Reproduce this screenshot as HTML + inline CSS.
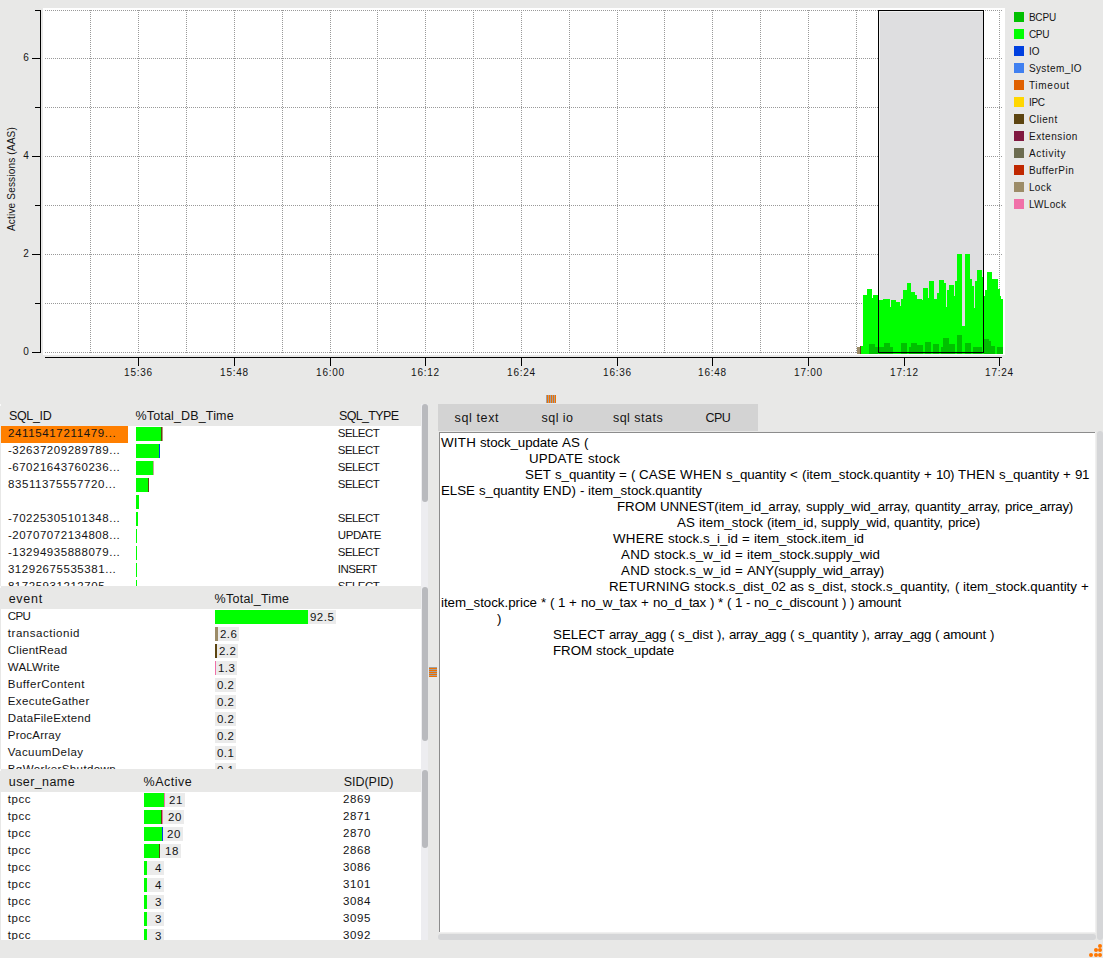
<!DOCTYPE html><html><head><meta charset="utf-8"><style>
html,body{margin:0;padding:0;}
body{width:1103px;height:958px;background:#e8e8e7;position:relative;overflow:hidden;font-family:"Liberation Sans", sans-serif;color:#141414;}
.a{position:absolute;}
.t{position:absolute;white-space:pre;line-height:1;}

</style></head><body>
<svg class="a" style="left:0;top:0" width="1103" height="392" viewBox="0 0 1103 392" shape-rendering="crispEdges"><rect x="43" y="8" width="962" height="347" fill="#ffffff"/><line x1="45" y1="10.5" x2="1002" y2="10.5" stroke="#999" stroke-width="1" stroke-dasharray="1 1"/><line x1="45" y1="58.5" x2="1002" y2="58.5" stroke="#999" stroke-width="1" stroke-dasharray="1 1"/><line x1="45" y1="107.5" x2="1002" y2="107.5" stroke="#999" stroke-width="1" stroke-dasharray="1 1"/><line x1="45" y1="156.5" x2="1002" y2="156.5" stroke="#999" stroke-width="1" stroke-dasharray="1 1"/><line x1="45" y1="205.5" x2="1002" y2="205.5" stroke="#999" stroke-width="1" stroke-dasharray="1 1"/><line x1="45" y1="254.5" x2="1002" y2="254.5" stroke="#999" stroke-width="1" stroke-dasharray="1 1"/><line x1="45" y1="303.5" x2="1002" y2="303.5" stroke="#999" stroke-width="1" stroke-dasharray="1 1"/><line x1="45" y1="352.5" x2="1002" y2="352.5" stroke="#999" stroke-width="1" stroke-dasharray="1 1"/><line x1="90.5" y1="10" x2="90.5" y2="353" stroke="#999" stroke-width="1" stroke-dasharray="1 1"/><line x1="138.5" y1="10" x2="138.5" y2="353" stroke="#999" stroke-width="1" stroke-dasharray="1 1"/><line x1="186.5" y1="10" x2="186.5" y2="353" stroke="#999" stroke-width="1" stroke-dasharray="1 1"/><line x1="234.5" y1="10" x2="234.5" y2="353" stroke="#999" stroke-width="1" stroke-dasharray="1 1"/><line x1="282.5" y1="10" x2="282.5" y2="353" stroke="#999" stroke-width="1" stroke-dasharray="1 1"/><line x1="330.5" y1="10" x2="330.5" y2="353" stroke="#999" stroke-width="1" stroke-dasharray="1 1"/><line x1="377.5" y1="10" x2="377.5" y2="353" stroke="#999" stroke-width="1" stroke-dasharray="1 1"/><line x1="425.5" y1="10" x2="425.5" y2="353" stroke="#999" stroke-width="1" stroke-dasharray="1 1"/><line x1="473.5" y1="10" x2="473.5" y2="353" stroke="#999" stroke-width="1" stroke-dasharray="1 1"/><line x1="521.5" y1="10" x2="521.5" y2="353" stroke="#999" stroke-width="1" stroke-dasharray="1 1"/><line x1="569.5" y1="10" x2="569.5" y2="353" stroke="#999" stroke-width="1" stroke-dasharray="1 1"/><line x1="617.5" y1="10" x2="617.5" y2="353" stroke="#999" stroke-width="1" stroke-dasharray="1 1"/><line x1="664.5" y1="10" x2="664.5" y2="353" stroke="#999" stroke-width="1" stroke-dasharray="1 1"/><line x1="712.5" y1="10" x2="712.5" y2="353" stroke="#999" stroke-width="1" stroke-dasharray="1 1"/><line x1="760.5" y1="10" x2="760.5" y2="353" stroke="#999" stroke-width="1" stroke-dasharray="1 1"/><line x1="808.5" y1="10" x2="808.5" y2="353" stroke="#999" stroke-width="1" stroke-dasharray="1 1"/><line x1="856.5" y1="10" x2="856.5" y2="353" stroke="#999" stroke-width="1" stroke-dasharray="1 1"/><line x1="904.5" y1="10" x2="904.5" y2="353" stroke="#999" stroke-width="1" stroke-dasharray="1 1"/><line x1="951.5" y1="10" x2="951.5" y2="353" stroke="#999" stroke-width="1" stroke-dasharray="1 1"/><line x1="999.5" y1="10" x2="999.5" y2="353" stroke="#999" stroke-width="1" stroke-dasharray="1 1"/><rect x="878" y="10" width="106" height="343" fill="#dedee0"/><rect x="879" y="11" width="104" height="1" fill="#efefef"/><rect x="879" y="11" width="1" height="341" fill="#efefef"/><polygon points="861,354 861,346 863,346 863,295 867,295 867,289 872,289 872,298 873,298 873,295 878,295 878,300 883,300 883,299 890,299 890,307 891,307 891,300 896,300 896,302 900,302 900,306 901,306 901,299 903,299 903,290 907,290 907,283 911,283 911,292 915,292 915,295 917,295 917,299 922,299 922,300 923,300 923,288 928,288 928,298 929,298 929,281 934,281 934,299 937,299 937,293 939,293 939,280 944,280 944,283 946,283 946,307 947,307 947,290 949,290 949,285 954,285 954,296 955,296 955,281 957,281 957,254 962,254 962,326 965,326 965,254 970,254 970,279 972,279 972,286 974,286 974,308 975,308 975,281 977,281 977,270 982,270 982,277 984,277 984,296 985,296 985,290 987,290 987,272 992,272 992,279 998,279 998,289 1000,289 1000,296 1001,296 1001,299 1003,299 1003,354" fill="#00ff00"/><rect x="869" y="344" width="6" height="10" fill="#00c000"/><rect x="875" y="347" width="3" height="7" fill="#00c000"/><rect x="879" y="347" width="5" height="7" fill="#00c000"/><rect x="884" y="343" width="6" height="11" fill="#00c000"/><rect x="890" y="347" width="3" height="7" fill="#00c000"/><rect x="901" y="343" width="6" height="11" fill="#00c000"/><rect x="909" y="347" width="2" height="7" fill="#00c000"/><rect x="911" y="343" width="6" height="11" fill="#00c000"/><rect x="917" y="345" width="6" height="9" fill="#00c000"/><rect x="925" y="342" width="6" height="12" fill="#00c000"/><rect x="933" y="344" width="6" height="10" fill="#00c000"/><rect x="941" y="347" width="2" height="7" fill="#00c000"/><rect x="943" y="338" width="6" height="16" fill="#00c000"/><rect x="949" y="344" width="6" height="10" fill="#00c000"/><rect x="957" y="335" width="5" height="19" fill="#00c000"/><rect x="965" y="343" width="6" height="11" fill="#00c000"/><rect x="973" y="347" width="9" height="7" fill="#00c000"/><rect x="984" y="339" width="5" height="15" fill="#00c000"/><rect x="989" y="341" width="2" height="13" fill="#00c000"/><rect x="991" y="346" width="4" height="8" fill="#00c000"/><rect x="997" y="347" width="6" height="7" fill="#00c000"/><rect x="857" y="347" width="3" height="7" fill="#9c8c68"/><rect x="860" y="346" width="1" height="8" fill="#5c4410"/><rect x="878.5" y="10.5" width="105" height="342" fill="none" stroke="#000" stroke-width="1"/><line x1="40.5" y1="10" x2="40.5" y2="353" stroke="#000"/><line x1="32" y1="58.5" x2="41" y2="58.5" stroke="#000"/><line x1="32" y1="156.5" x2="41" y2="156.5" stroke="#000"/><line x1="32" y1="254.5" x2="41" y2="254.5" stroke="#000"/><line x1="32" y1="352.5" x2="41" y2="352.5" stroke="#000"/><line x1="35" y1="10.5" x2="41" y2="10.5" stroke="#000"/><line x1="35" y1="107.5" x2="41" y2="107.5" stroke="#000"/><line x1="35" y1="205.5" x2="41" y2="205.5" stroke="#000"/><line x1="35" y1="303.5" x2="41" y2="303.5" stroke="#000"/><line x1="45" y1="357.5" x2="1002" y2="357.5" stroke="#000"/><line x1="138.5" y1="358" x2="138.5" y2="366" stroke="#000"/><line x1="234.5" y1="358" x2="234.5" y2="366" stroke="#000"/><line x1="330.5" y1="358" x2="330.5" y2="366" stroke="#000"/><line x1="425.5" y1="358" x2="425.5" y2="366" stroke="#000"/><line x1="521.5" y1="358" x2="521.5" y2="366" stroke="#000"/><line x1="617.5" y1="358" x2="617.5" y2="366" stroke="#000"/><line x1="712.5" y1="358" x2="712.5" y2="366" stroke="#000"/><line x1="808.5" y1="358" x2="808.5" y2="366" stroke="#000"/><line x1="904.5" y1="358" x2="904.5" y2="366" stroke="#000"/><line x1="999.5" y1="358" x2="999.5" y2="366" stroke="#000"/></svg>
<div class="t" style="left:23.14px;top:53px;font-size:10px;letter-spacing:0.801px;color:#141414;">6</div>
<div class="t" style="left:23.14px;top:151px;font-size:10px;letter-spacing:0.801px;color:#141414;">4</div>
<div class="t" style="left:23.14px;top:249px;font-size:10px;letter-spacing:0.801px;color:#141414;">2</div>
<div class="t" style="left:23.14px;top:347px;font-size:10px;letter-spacing:0.801px;color:#141414;">0</div>
<div class="t" style="left:-47.8px;top:173.7px;width:120px;text-align:center;font-size:10px;letter-spacing:0.189px;transform:rotate(-90deg);transform-origin:50% 50%;">Active Sessions (AAS)</div>
<div class="t" style="left:124.09px;top:368px;font-size:10px;letter-spacing:0.759px;color:#141414;">15:36</div>
<div class="t" style="left:220.09px;top:368px;font-size:10px;letter-spacing:0.759px;color:#141414;">15:48</div>
<div class="t" style="left:316.09px;top:368px;font-size:10px;letter-spacing:0.759px;color:#141414;">16:00</div>
<div class="t" style="left:411.09px;top:368px;font-size:10px;letter-spacing:0.759px;color:#141414;">16:12</div>
<div class="t" style="left:507.09px;top:368px;font-size:10px;letter-spacing:0.759px;color:#141414;">16:24</div>
<div class="t" style="left:603.09px;top:368px;font-size:10px;letter-spacing:0.759px;color:#141414;">16:36</div>
<div class="t" style="left:698.09px;top:368px;font-size:10px;letter-spacing:0.759px;color:#141414;">16:48</div>
<div class="t" style="left:794.09px;top:368px;font-size:10px;letter-spacing:0.759px;color:#141414;">17:00</div>
<div class="t" style="left:890.09px;top:368px;font-size:10px;letter-spacing:0.759px;color:#141414;">17:12</div>
<div class="t" style="left:985.09px;top:368px;font-size:10px;letter-spacing:0.759px;color:#141414;">17:24</div>
<div class="a" style="left:1014px;top:12px;width:10px;height:10px;background:#00c000"></div>
<div class="t" style="left:1028.90px;top:13px;font-size:10px;letter-spacing:-0.192px;color:#141414;">BCPU</div>
<div class="a" style="left:1014px;top:29px;width:10px;height:10px;background:#00ff00"></div>
<div class="t" style="left:1028.90px;top:30px;font-size:10px;letter-spacing:-0.260px;color:#141414;">CPU</div>
<div class="a" style="left:1014px;top:46px;width:10px;height:10px;background:#0040e0"></div>
<div class="t" style="left:1028.90px;top:47px;font-size:10px;letter-spacing:0.132px;color:#141414;">IO</div>
<div class="a" style="left:1014px;top:63px;width:10px;height:10px;background:#4080f0"></div>
<div class="t" style="left:1028.90px;top:64px;font-size:10px;letter-spacing:0.406px;color:#141414;">System_IO</div>
<div class="a" style="left:1014px;top:80px;width:10px;height:10px;background:#e06000"></div>
<div class="t" style="left:1028.90px;top:81px;font-size:10px;letter-spacing:0.728px;color:#141414;">Timeout</div>
<div class="a" style="left:1014px;top:97px;width:10px;height:10px;background:#ffd700"></div>
<div class="t" style="left:1028.90px;top:98px;font-size:10px;letter-spacing:-0.236px;color:#141414;">IPC</div>
<div class="a" style="left:1014px;top:114px;width:10px;height:10px;background:#5c4410"></div>
<div class="t" style="left:1028.90px;top:115px;font-size:10px;letter-spacing:0.564px;color:#141414;">Client</div>
<div class="a" style="left:1014px;top:131px;width:10px;height:10px;background:#801840"></div>
<div class="t" style="left:1028.90px;top:132px;font-size:10px;letter-spacing:0.575px;color:#141414;">Extension</div>
<div class="a" style="left:1014px;top:148px;width:10px;height:10px;background:#6c6c50"></div>
<div class="t" style="left:1028.90px;top:149px;font-size:10px;letter-spacing:0.716px;color:#141414;">Activity</div>
<div class="a" style="left:1014px;top:165px;width:10px;height:10px;background:#c02800"></div>
<div class="t" style="left:1028.90px;top:166px;font-size:10px;letter-spacing:0.481px;color:#141414;">BufferPin</div>
<div class="a" style="left:1014px;top:182px;width:10px;height:10px;background:#9c8c68"></div>
<div class="t" style="left:1028.90px;top:183px;font-size:10px;letter-spacing:0.420px;color:#141414;">Lock</div>
<div class="a" style="left:1014px;top:199px;width:10px;height:10px;background:#f070a8"></div>
<div class="t" style="left:1028.90px;top:200px;font-size:10px;letter-spacing:0.327px;color:#141414;">LWLock</div>
<div class="a" style="left:546px;top:395px;width:10px;height:8px;background:repeating-linear-gradient(90deg,#a0a0a0 0 1px,#f07000 1px 2px)"></div>
<div class="a" style="left:429px;top:667px;width:8px;height:10px;background:repeating-linear-gradient(180deg,#a0a0a0 0 1px,#f07000 1px 2px)"></div>
<div class="a" style="left:1px;top:426px;width:420px;height:160px;background:#fff;overflow:hidden">
<div class="a" style="left:0px;top:0px;width:127px;height:17px;background:#ff7f00;"></div>
<div class="t" style="left:6.90px;top:2px;font-size:11.5px;letter-spacing:0.650px;color:#141414;">24115417211479...</div>
<div class="a" style="left:135px;top:1px;width:25px;height:14px;background:#00ff00;"></div>
<div class="a" style="left:160px;top:1px;width:1px;height:14px;background:#5c4410;"></div>
<div class="a" style="left:161px;top:1px;width:1px;height:14px;background:#b09878;"></div>
<div class="t" style="left:336.80px;top:2px;font-size:11.5px;letter-spacing:-0.554px;color:#141414;">SELECT</div>
<div class="t" style="left:6.90px;top:19px;font-size:11.5px;letter-spacing:0.527px;color:#141414;">-32637209289789...</div>
<div class="a" style="left:135px;top:18px;width:23px;height:14px;background:#00ff00;"></div>
<div class="a" style="left:158px;top:18px;width:1px;height:14px;background:#0040e0;"></div>
<div class="t" style="left:336.80px;top:19px;font-size:11.5px;letter-spacing:-0.554px;color:#141414;">SELECT</div>
<div class="t" style="left:6.90px;top:36px;font-size:11.5px;letter-spacing:0.527px;color:#141414;">-67021643760236...</div>
<div class="a" style="left:135px;top:35px;width:17px;height:14px;background:#00ff00;"></div>
<div class="a" style="left:152px;top:35px;width:1px;height:14px;background:#c8a898;"></div>
<div class="t" style="left:336.80px;top:36px;font-size:11.5px;letter-spacing:-0.554px;color:#141414;">SELECT</div>
<div class="t" style="left:6.90px;top:53px;font-size:11.5px;letter-spacing:0.600px;color:#141414;">83511375557720...</div>
<div class="a" style="left:135px;top:52px;width:12px;height:14px;background:#00ff00;"></div>
<div class="a" style="left:147px;top:52px;width:1px;height:14px;background:#5c4410;"></div>
<div class="t" style="left:336.80px;top:53px;font-size:11.5px;letter-spacing:-0.554px;color:#141414;">SELECT</div>
<div class="a" style="left:135px;top:69px;width:3px;height:14px;background:#00ff00;"></div>
<div class="t" style="left:6.90px;top:87px;font-size:11.5px;letter-spacing:0.527px;color:#141414;">-70225305101348...</div>
<div class="a" style="left:135px;top:86px;width:2px;height:14px;background:#00ff00;"></div>
<div class="t" style="left:336.80px;top:87px;font-size:11.5px;letter-spacing:-0.554px;color:#141414;">SELECT</div>
<div class="t" style="left:6.90px;top:104px;font-size:11.5px;letter-spacing:0.527px;color:#141414;">-20707072134808...</div>
<div class="a" style="left:135px;top:103px;width:1px;height:14px;background:#00ff00;"></div>
<div class="t" style="left:336.80px;top:104px;font-size:11.5px;letter-spacing:-0.415px;color:#141414;">UPDATE</div>
<div class="t" style="left:6.90px;top:121px;font-size:11.5px;letter-spacing:0.527px;color:#141414;">-13294935888079...</div>
<div class="a" style="left:135px;top:120px;width:1px;height:14px;background:#00ff00;"></div>
<div class="t" style="left:336.80px;top:121px;font-size:11.5px;letter-spacing:-0.554px;color:#141414;">SELECT</div>
<div class="t" style="left:6.90px;top:138px;font-size:11.5px;letter-spacing:0.550px;color:#141414;">31292675535381...</div>
<div class="a" style="left:135px;top:137px;width:1px;height:14px;background:#00ff00;"></div>
<div class="t" style="left:336.80px;top:138px;font-size:11.5px;letter-spacing:-0.499px;color:#141414;">INSERT</div>
<div class="t" style="left:6.90px;top:155px;font-size:11.5px;letter-spacing:0.550px;color:#141414;">81725931212705...</div>
<div class="a" style="left:135px;top:154px;width:1px;height:14px;background:#00ff00;"></div>
<div class="t" style="left:336.80px;top:155px;font-size:11.5px;letter-spacing:-0.554px;color:#141414;">SELECT</div>
</div>
<div class="t" style="left:8.90px;top:410px;font-size:12.5px;letter-spacing:-0.323px;color:#141414;">SQL_ID</div>
<div class="t" style="left:135.50px;top:410px;font-size:12.5px;letter-spacing:0.155px;color:#141414;">%Total_DB_Time</div>
<div class="t" style="left:339.10px;top:410px;font-size:12.5px;letter-spacing:-0.673px;color:#141414;">SQL_TYPE</div>
<div class="a" style="left:1px;top:609px;width:420px;height:160px;background:#fff;overflow:hidden">
<div class="t" style="left:6.80px;top:2px;font-size:11.5px;letter-spacing:-0.638px;color:#141414;">CPU</div>
<div class="a" style="left:214px;top:1px;width:93px;height:14px;background:#00ff00;"></div>
<div class="a" style="left:307px;top:1px;width:28px;height:14px;background:#ebebeb;"></div>
<div class="t" style="left:308.90px;top:3px;font-size:11.5px;letter-spacing:0.527px;color:#141414;">92.5</div>
<div class="t" style="left:6.80px;top:19px;font-size:11.5px;letter-spacing:0.536px;color:#141414;">transactionid</div>
<div class="a" style="left:214px;top:18px;width:3px;height:14px;background:#9c8c68;"></div>
<div class="a" style="left:217px;top:18px;width:21px;height:14px;background:#ebebeb;"></div>
<div class="t" style="left:218.90px;top:20px;font-size:11.5px;letter-spacing:0.502px;color:#141414;">2.6</div>
<div class="t" style="left:6.80px;top:36px;font-size:11.5px;letter-spacing:0.259px;color:#141414;">ClientRead</div>
<div class="a" style="left:214px;top:35px;width:2px;height:14px;background:#5c4410;"></div>
<div class="a" style="left:216px;top:35px;width:21px;height:14px;background:#ebebeb;"></div>
<div class="t" style="left:217.90px;top:37px;font-size:11.5px;letter-spacing:0.502px;color:#141414;">2.2</div>
<div class="t" style="left:6.80px;top:53px;font-size:11.5px;letter-spacing:0.212px;color:#141414;">WALWrite</div>
<div class="a" style="left:214px;top:52px;width:1px;height:14px;background:#f070a8;"></div>
<div class="a" style="left:215px;top:52px;width:21px;height:14px;background:#ebebeb;"></div>
<div class="t" style="left:216.90px;top:54px;font-size:11.5px;letter-spacing:0.502px;color:#141414;">1.3</div>
<div class="t" style="left:6.80px;top:70px;font-size:11.5px;letter-spacing:0.491px;color:#141414;">BufferContent</div>
<div class="a" style="left:214px;top:69px;width:21px;height:14px;background:#ebebeb;"></div>
<div class="t" style="left:215.90px;top:71px;font-size:11.5px;letter-spacing:0.502px;color:#141414;">0.2</div>
<div class="t" style="left:6.80px;top:87px;font-size:11.5px;letter-spacing:0.394px;color:#141414;">ExecuteGather</div>
<div class="a" style="left:214px;top:86px;width:21px;height:14px;background:#ebebeb;"></div>
<div class="t" style="left:215.90px;top:88px;font-size:11.5px;letter-spacing:0.502px;color:#141414;">0.2</div>
<div class="t" style="left:6.80px;top:104px;font-size:11.5px;letter-spacing:0.324px;color:#141414;">DataFileExtend</div>
<div class="a" style="left:214px;top:103px;width:21px;height:14px;background:#ebebeb;"></div>
<div class="t" style="left:215.90px;top:105px;font-size:11.5px;letter-spacing:0.502px;color:#141414;">0.2</div>
<div class="t" style="left:6.80px;top:121px;font-size:11.5px;letter-spacing:0.223px;color:#141414;">ProcArray</div>
<div class="a" style="left:214px;top:120px;width:21px;height:14px;background:#ebebeb;"></div>
<div class="t" style="left:215.90px;top:122px;font-size:11.5px;letter-spacing:0.502px;color:#141414;">0.2</div>
<div class="t" style="left:6.80px;top:138px;font-size:11.5px;letter-spacing:0.448px;color:#141414;">VacuumDelay</div>
<div class="a" style="left:214px;top:137px;width:21px;height:14px;background:#ebebeb;"></div>
<div class="t" style="left:215.90px;top:139px;font-size:11.5px;letter-spacing:0.502px;color:#141414;">0.1</div>
<div class="t" style="left:6.80px;top:155px;font-size:11.5px;letter-spacing:0.384px;color:#141414;">BgWorkerShutdown</div>
<div class="a" style="left:214px;top:154px;width:21px;height:14px;background:#ebebeb;"></div>
<div class="t" style="left:215.90px;top:156px;font-size:11.5px;letter-spacing:0.502px;color:#141414;">0.1</div>
</div>
<div class="t" style="left:8.70px;top:593px;font-size:12.5px;letter-spacing:0.720px;color:#141414;">event</div>
<div class="t" style="left:214.50px;top:593px;font-size:12.5px;letter-spacing:0.274px;color:#141414;">%Total_Time</div>
<div class="a" style="left:1px;top:792px;width:420px;height:148px;background:#fff;overflow:hidden">
<div class="t" style="left:6.80px;top:2px;font-size:11.5px;letter-spacing:0.575px;color:#141414;">tpcc</div>
<div class="a" style="left:143px;top:1px;width:20px;height:14px;background:#00ff00;"></div>
<div class="a" style="left:163px;top:1px;width:1px;height:14px;background:#f070a8;"></div>
<div class="a" style="left:164px;top:1px;width:20px;height:14px;background:#ebebeb;"></div>
<div class="t" style="left:168.00px;top:3px;font-size:11.5px;letter-spacing:0.603px;color:#141414;">21</div>
<div class="t" style="left:342.10px;top:2px;font-size:11.5px;letter-spacing:0.603px;color:#141414;">2869</div>
<div class="t" style="left:6.80px;top:19px;font-size:11.5px;letter-spacing:0.575px;color:#141414;">tpcc</div>
<div class="a" style="left:143px;top:18px;width:17px;height:14px;background:#00ff00;"></div>
<div class="a" style="left:160px;top:18px;width:1px;height:14px;background:#5c4410;"></div>
<div class="a" style="left:161px;top:18px;width:1px;height:14px;background:#f070a8;"></div>
<div class="a" style="left:162px;top:18px;width:21px;height:14px;background:#ebebeb;"></div>
<div class="t" style="left:167.00px;top:20px;font-size:11.5px;letter-spacing:0.603px;color:#141414;">20</div>
<div class="t" style="left:342.10px;top:19px;font-size:11.5px;letter-spacing:0.603px;color:#141414;">2871</div>
<div class="t" style="left:6.80px;top:36px;font-size:11.5px;letter-spacing:0.575px;color:#141414;">tpcc</div>
<div class="a" style="left:143px;top:35px;width:18px;height:14px;background:#00ff00;"></div>
<div class="a" style="left:161px;top:35px;width:1px;height:14px;background:#0040e0;"></div>
<div class="a" style="left:162px;top:35px;width:20px;height:14px;background:#ebebeb;"></div>
<div class="t" style="left:166.00px;top:37px;font-size:11.5px;letter-spacing:0.603px;color:#141414;">20</div>
<div class="t" style="left:342.10px;top:36px;font-size:11.5px;letter-spacing:0.603px;color:#141414;">2870</div>
<div class="t" style="left:6.80px;top:53px;font-size:11.5px;letter-spacing:0.575px;color:#141414;">tpcc</div>
<div class="a" style="left:143px;top:52px;width:15px;height:14px;background:#00ff00;"></div>
<div class="a" style="left:158px;top:52px;width:1px;height:14px;background:#5c4410;"></div>
<div class="a" style="left:159px;top:52px;width:21px;height:14px;background:#ebebeb;"></div>
<div class="t" style="left:164.00px;top:54px;font-size:11.5px;letter-spacing:0.603px;color:#141414;">18</div>
<div class="t" style="left:342.10px;top:53px;font-size:11.5px;letter-spacing:0.603px;color:#141414;">2868</div>
<div class="t" style="left:6.80px;top:70px;font-size:11.5px;letter-spacing:0.575px;color:#141414;">tpcc</div>
<div class="a" style="left:143px;top:69px;width:3px;height:14px;background:#00ff00;"></div>
<div class="a" style="left:146px;top:69px;width:17px;height:14px;background:#ebebeb;"></div>
<div class="t" style="left:154.00px;top:71px;font-size:11.5px;letter-spacing:0.603px;color:#141414;">4</div>
<div class="t" style="left:342.10px;top:70px;font-size:11.5px;letter-spacing:0.603px;color:#141414;">3086</div>
<div class="t" style="left:6.80px;top:87px;font-size:11.5px;letter-spacing:0.575px;color:#141414;">tpcc</div>
<div class="a" style="left:143px;top:86px;width:3px;height:14px;background:#00ff00;"></div>
<div class="a" style="left:146px;top:86px;width:17px;height:14px;background:#ebebeb;"></div>
<div class="t" style="left:154.00px;top:88px;font-size:11.5px;letter-spacing:0.603px;color:#141414;">4</div>
<div class="t" style="left:342.10px;top:87px;font-size:11.5px;letter-spacing:0.603px;color:#141414;">3101</div>
<div class="t" style="left:6.80px;top:104px;font-size:11.5px;letter-spacing:0.575px;color:#141414;">tpcc</div>
<div class="a" style="left:143px;top:103px;width:3px;height:14px;background:#00ff00;"></div>
<div class="a" style="left:146px;top:103px;width:17px;height:14px;background:#ebebeb;"></div>
<div class="t" style="left:154.00px;top:105px;font-size:11.5px;letter-spacing:0.603px;color:#141414;">3</div>
<div class="t" style="left:342.10px;top:104px;font-size:11.5px;letter-spacing:0.603px;color:#141414;">3084</div>
<div class="t" style="left:6.80px;top:121px;font-size:11.5px;letter-spacing:0.575px;color:#141414;">tpcc</div>
<div class="a" style="left:143px;top:120px;width:3px;height:14px;background:#00ff00;"></div>
<div class="a" style="left:146px;top:120px;width:17px;height:14px;background:#ebebeb;"></div>
<div class="t" style="left:154.00px;top:122px;font-size:11.5px;letter-spacing:0.603px;color:#141414;">3</div>
<div class="t" style="left:342.10px;top:121px;font-size:11.5px;letter-spacing:0.603px;color:#141414;">3095</div>
<div class="t" style="left:6.80px;top:138px;font-size:11.5px;letter-spacing:0.575px;color:#141414;">tpcc</div>
<div class="a" style="left:143px;top:137px;width:3px;height:14px;background:#00ff00;"></div>
<div class="a" style="left:146px;top:137px;width:17px;height:14px;background:#ebebeb;"></div>
<div class="t" style="left:154.00px;top:139px;font-size:11.5px;letter-spacing:0.603px;color:#141414;">3</div>
<div class="t" style="left:342.10px;top:138px;font-size:11.5px;letter-spacing:0.603px;color:#141414;">3092</div>
</div>
<div class="t" style="left:8.80px;top:776px;font-size:12.5px;letter-spacing:0.408px;color:#141414;">user_name</div>
<div class="t" style="left:143.60px;top:776px;font-size:12.5px;letter-spacing:0.481px;color:#141414;">%Active</div>
<div class="t" style="left:343.70px;top:776px;font-size:12.5px;letter-spacing:-0.028px;color:#141414;">SID(PID)</div>
<div class="a" style="left:0px;top:404px;width:1px;height:2px;background:#fafafa;"></div>
<div class="a" style="left:0px;top:586px;width:1px;height:2px;background:#fafafa;"></div>
<div class="a" style="left:0px;top:769px;width:1px;height:2px;background:#fafafa;"></div>
<div class="a" style="left:421px;top:404px;width:7px;height:536px;background:#ededf0;"></div>
<div class="a" style="left:422px;top:404px;width:6px;height:98px;background:#b9babe;border-radius:3px"></div>
<div class="a" style="left:422px;top:587px;width:6px;height:154px;background:#b9babe;border-radius:3px"></div>
<div class="a" style="left:422px;top:770px;width:6px;height:78px;background:#b9babe;border-radius:3px"></div>
<div class="a" style="left:438px;top:404px;width:320px;height:27px;background:#d3d3d3;"></div>
<div class="t" style="left:454.50px;top:412px;font-size:12.5px;letter-spacing:0.638px;color:#141414;">sql text</div>
<div class="t" style="left:541.60px;top:412px;font-size:12.5px;letter-spacing:0.419px;color:#141414;">sql io</div>
<div class="t" style="left:612.90px;top:412px;font-size:12.5px;letter-spacing:0.493px;color:#141414;">sql stats</div>
<div class="t" style="left:705.60px;top:412px;font-size:12.5px;letter-spacing:-0.664px;color:#141414;">CPU</div>
<div class="a" style="left:440px;top:433px;width:655px;height:499px;background:#fff;"></div>
<div class="a" style="left:439px;top:432px;width:657px;height:1px;background:#8c8c8c;"></div>
<div class="a" style="left:439px;top:432px;width:1px;height:501px;background:#8c8c8c;"></div>
<div class="a" style="left:1095px;top:432px;width:1px;height:501px;background:#f0f0f0;"></div>
<div class="a" style="left:439px;top:932px;width:657px;height:1px;background:#f0f0f0;"></div>
<div class="a" style="left:438px;top:934px;width:658px;height:6px;background:#d5d6d8;border-radius:3px"></div>
<div class="a" style="left:1097px;top:431px;width:6px;height:509px;background:#d5d6d8;border-radius:3px"></div>
<div class="t" style="left:441px;top:436px;font-size:13.333px;letter-spacing:0.235px;color:#000">WITH</div>
<div class="t" style="left:480px;top:436px;font-size:13.333px;letter-spacing:-0.110px;color:#000">stock_update</div>
<div class="t" style="left:562px;top:436px;font-size:13.333px;letter-spacing:0.107px;color:#000">AS</div>
<div class="t" style="left:584px;top:436px;font-size:13.333px;letter-spacing:-0.440px;color:#000">(</div>
<div class="t" style="left:529px;top:452px;font-size:13.333px;letter-spacing:0.153px;color:#000">UPDATE</div>
<div class="t" style="left:588px;top:452px;font-size:13.333px;letter-spacing:0.176px;color:#000">stock</div>
<div class="t" style="left:525px;top:468px;font-size:13.333px;letter-spacing:0.023px;color:#000">SET</div>
<div class="t" style="left:555px;top:468px;font-size:13.333px;letter-spacing:-0.078px;color:#000">s_quantity</div>
<div class="t" style="left:619px;top:468px;font-size:13.333px;letter-spacing:0.214px;color:#000">=</div>
<div class="t" style="left:631px;top:468px;font-size:13.333px;letter-spacing:-0.440px;color:#000">(</div>
<div class="t" style="left:639px;top:468px;font-size:13.333px;letter-spacing:0.173px;color:#000">CASE</div>
<div class="t" style="left:680px;top:468px;font-size:13.333px;letter-spacing:0.316px;color:#000">WHEN</div>
<div class="t" style="left:726px;top:468px;font-size:13.333px;letter-spacing:-0.078px;color:#000">s_quantity</div>
<div class="t" style="left:790px;top:468px;font-size:13.333px;letter-spacing:0.214px;color:#000">&lt;</div>
<div class="t" style="left:802px;top:468px;font-size:13.333px;letter-spacing:-0.028px;color:#000">(item_stock.quantity</div>
<div class="t" style="left:924px;top:468px;font-size:13.333px;letter-spacing:0.214px;color:#000">+</div>
<div class="t" style="left:936px;top:468px;font-size:13.333px;letter-spacing:-0.423px;color:#000">10)</div>
<div class="t" style="left:958px;top:468px;font-size:13.333px;letter-spacing:0.176px;color:#000">THEN</div>
<div class="t" style="left:999px;top:468px;font-size:13.333px;letter-spacing:-0.078px;color:#000">s_quantity</div>
<div class="t" style="left:1063px;top:468px;font-size:13.333px;letter-spacing:0.214px;color:#000">+</div>
<div class="t" style="left:1075px;top:468px;font-size:13.333px;letter-spacing:-0.415px;color:#000">91</div>
<div class="t" style="left:441px;top:484px;font-size:13.333px;letter-spacing:-0.024px;color:#000">ELSE</div>
<div class="t" style="left:479px;top:484px;font-size:13.333px;letter-spacing:-0.078px;color:#000">s_quantity</div>
<div class="t" style="left:543px;top:484px;font-size:13.333px;letter-spacing:0.102px;color:#000">END)</div>
<div class="t" style="left:580px;top:484px;font-size:13.333px;letter-spacing:-0.440px;color:#000">-</div>
<div class="t" style="left:588px;top:484px;font-size:13.333px;letter-spacing:-0.007px;color:#000">item_stock.quantity</div>
<div class="t" style="left:617px;top:500px;font-size:13.333px;letter-spacing:-0.063px;color:#000">FROM</div>
<div class="t" style="left:660px;top:500px;font-size:13.333px;letter-spacing:-0.083px;color:#000">UNNEST(item_id_array,</div>
<div class="t" style="left:806px;top:500px;font-size:13.333px;letter-spacing:-0.145px;color:#000">supply_wid_array,</div>
<div class="t" style="left:915px;top:500px;font-size:13.333px;letter-spacing:-0.146px;color:#000">quantity_array,</div>
<div class="t" style="left:1005px;top:500px;font-size:13.333px;letter-spacing:-0.261px;color:#000">price_array)</div>
<div class="t" style="left:677px;top:516px;font-size:13.333px;letter-spacing:0.107px;color:#000">AS</div>
<div class="t" style="left:699px;top:516px;font-size:13.333px;letter-spacing:0.028px;color:#000">item_stock</div>
<div class="t" style="left:767px;top:516px;font-size:13.333px;letter-spacing:-0.125px;color:#000">(item_id,</div>
<div class="t" style="left:821px;top:516px;font-size:13.333px;letter-spacing:-0.061px;color:#000">supply_wid,</div>
<div class="t" style="left:894px;top:516px;font-size:13.333px;letter-spacing:-0.045px;color:#000">quantity,</div>
<div class="t" style="left:948px;top:516px;font-size:13.333px;letter-spacing:-0.223px;color:#000">price)</div>
<div class="t" style="left:613px;top:532px;font-size:13.333px;letter-spacing:0.274px;color:#000">WHERE</div>
<div class="t" style="left:668px;top:532px;font-size:13.333px;letter-spacing:0.028px;color:#000">stock.s_i_id</div>
<div class="t" style="left:742px;top:532px;font-size:13.333px;letter-spacing:0.214px;color:#000">=</div>
<div class="t" style="left:754px;top:532px;font-size:13.333px;letter-spacing:-0.023px;color:#000">item_stock.item_id</div>
<div class="t" style="left:621px;top:548px;font-size:13.333px;letter-spacing:0.283px;color:#000">AND</div>
<div class="t" style="left:654px;top:548px;font-size:13.333px;letter-spacing:0.056px;color:#000">stock.s_w_id</div>
<div class="t" style="left:735px;top:548px;font-size:13.333px;letter-spacing:0.214px;color:#000">=</div>
<div class="t" style="left:747px;top:548px;font-size:13.333px;letter-spacing:-0.019px;color:#000">item_stock.supply_wid</div>
<div class="t" style="left:621px;top:564px;font-size:13.333px;letter-spacing:0.283px;color:#000">AND</div>
<div class="t" style="left:654px;top:564px;font-size:13.333px;letter-spacing:0.056px;color:#000">stock.s_w_id</div>
<div class="t" style="left:735px;top:564px;font-size:13.333px;letter-spacing:0.214px;color:#000">=</div>
<div class="t" style="left:747px;top:564px;font-size:13.333px;letter-spacing:-0.145px;color:#000">ANY(supply_wid_array)</div>
<div class="t" style="left:609px;top:580px;font-size:13.333px;letter-spacing:0.194px;color:#000">RETURNING</div>
<div class="t" style="left:694px;top:580px;font-size:13.333px;letter-spacing:0.007px;color:#000">stock.s_dist_02</div>
<div class="t" style="left:790px;top:580px;font-size:13.333px;letter-spacing:-0.041px;color:#000">as</div>
<div class="t" style="left:808px;top:580px;font-size:13.333px;letter-spacing:0.067px;color:#000">s_dist,</div>
<div class="t" style="left:851px;top:580px;font-size:13.333px;letter-spacing:0.041px;color:#000">stock.s_quantity,</div>
<div class="t" style="left:955px;top:580px;font-size:13.333px;letter-spacing:-0.440px;color:#000">(</div>
<div class="t" style="left:963px;top:580px;font-size:13.333px;letter-spacing:-0.007px;color:#000">item_stock.quantity</div>
<div class="t" style="left:1081px;top:580px;font-size:13.333px;letter-spacing:0.214px;color:#000">+</div>
<div class="t" style="left:441px;top:596px;font-size:13.333px;letter-spacing:-0.020px;color:#000">item_stock.price</div>
<div class="t" style="left:541px;top:596px;font-size:13.333px;letter-spacing:-0.189px;color:#000">*</div>
<div class="t" style="left:550px;top:596px;font-size:13.333px;letter-spacing:-0.440px;color:#000">(</div>
<div class="t" style="left:558px;top:596px;font-size:13.333px;letter-spacing:-0.415px;color:#000">1</div>
<div class="t" style="left:569px;top:596px;font-size:13.333px;letter-spacing:0.214px;color:#000">+</div>
<div class="t" style="left:581px;top:596px;font-size:13.333px;letter-spacing:-0.134px;color:#000">no_w_tax</div>
<div class="t" style="left:641px;top:596px;font-size:13.333px;letter-spacing:0.214px;color:#000">+</div>
<div class="t" style="left:653px;top:596px;font-size:13.333px;letter-spacing:-0.233px;color:#000">no_d_tax</div>
<div class="t" style="left:710px;top:596px;font-size:13.333px;letter-spacing:-0.440px;color:#000">)</div>
<div class="t" style="left:718px;top:596px;font-size:13.333px;letter-spacing:-0.189px;color:#000">*</div>
<div class="t" style="left:727px;top:596px;font-size:13.333px;letter-spacing:-0.440px;color:#000">(</div>
<div class="t" style="left:735px;top:596px;font-size:13.333px;letter-spacing:-0.415px;color:#000">1</div>
<div class="t" style="left:746px;top:596px;font-size:13.333px;letter-spacing:-0.440px;color:#000">-</div>
<div class="t" style="left:754px;top:596px;font-size:13.333px;letter-spacing:-0.153px;color:#000">no_c_discount</div>
<div class="t" style="left:842px;top:596px;font-size:13.333px;letter-spacing:-0.440px;color:#000">)</div>
<div class="t" style="left:850px;top:596px;font-size:13.333px;letter-spacing:-0.440px;color:#000">)</div>
<div class="t" style="left:858px;top:596px;font-size:13.333px;letter-spacing:-0.245px;color:#000">amount</div>
<div class="t" style="left:497px;top:612px;font-size:13.333px;letter-spacing:-0.440px;color:#000">)</div>
<div class="t" style="left:553px;top:628px;font-size:13.333px;letter-spacing:0.022px;color:#000">SELECT</div>
<div class="t" style="left:609px;top:628px;font-size:13.333px;letter-spacing:-0.338px;color:#000">array_agg</div>
<div class="t" style="left:670px;top:628px;font-size:13.333px;letter-spacing:-0.440px;color:#000">(</div>
<div class="t" style="left:678px;top:628px;font-size:13.333px;letter-spacing:0.028px;color:#000">s_dist</div>
<div class="t" style="left:717px;top:628px;font-size:13.333px;letter-spacing:-0.072px;color:#000">),</div>
<div class="t" style="left:729px;top:628px;font-size:13.333px;letter-spacing:-0.338px;color:#000">array_agg</div>
<div class="t" style="left:790px;top:628px;font-size:13.333px;letter-spacing:-0.440px;color:#000">(</div>
<div class="t" style="left:798px;top:628px;font-size:13.333px;letter-spacing:-0.078px;color:#000">s_quantity</div>
<div class="t" style="left:862px;top:628px;font-size:13.333px;letter-spacing:-0.072px;color:#000">),</div>
<div class="t" style="left:874px;top:628px;font-size:13.333px;letter-spacing:-0.338px;color:#000">array_agg</div>
<div class="t" style="left:935px;top:628px;font-size:13.333px;letter-spacing:-0.440px;color:#000">(</div>
<div class="t" style="left:943px;top:628px;font-size:13.333px;letter-spacing:-0.245px;color:#000">amount</div>
<div class="t" style="left:990px;top:628px;font-size:13.333px;letter-spacing:-0.440px;color:#000">)</div>
<div class="t" style="left:553px;top:644px;font-size:13.333px;letter-spacing:-0.063px;color:#000">FROM</div>
<div class="t" style="left:596px;top:644px;font-size:13.333px;letter-spacing:-0.110px;color:#000">stock_update</div>
<div class="a" style="left:1098px;top:944px;width:4px;height:4px;background:#ff7700;border-radius:2px"></div>
<div class="a" style="left:1094px;top:948px;width:4px;height:4px;background:#ff7700;border-radius:2px"></div>
<div class="a" style="left:1098px;top:948px;width:4px;height:4px;background:#ff7700;border-radius:2px"></div>
<div class="a" style="left:1089px;top:953px;width:4px;height:4px;background:#ff7700;border-radius:2px"></div>
<div class="a" style="left:1094px;top:953px;width:4px;height:4px;background:#ff7700;border-radius:2px"></div>
<div class="a" style="left:1098px;top:953px;width:4px;height:4px;background:#ff7700;border-radius:2px"></div>
</body></html>
